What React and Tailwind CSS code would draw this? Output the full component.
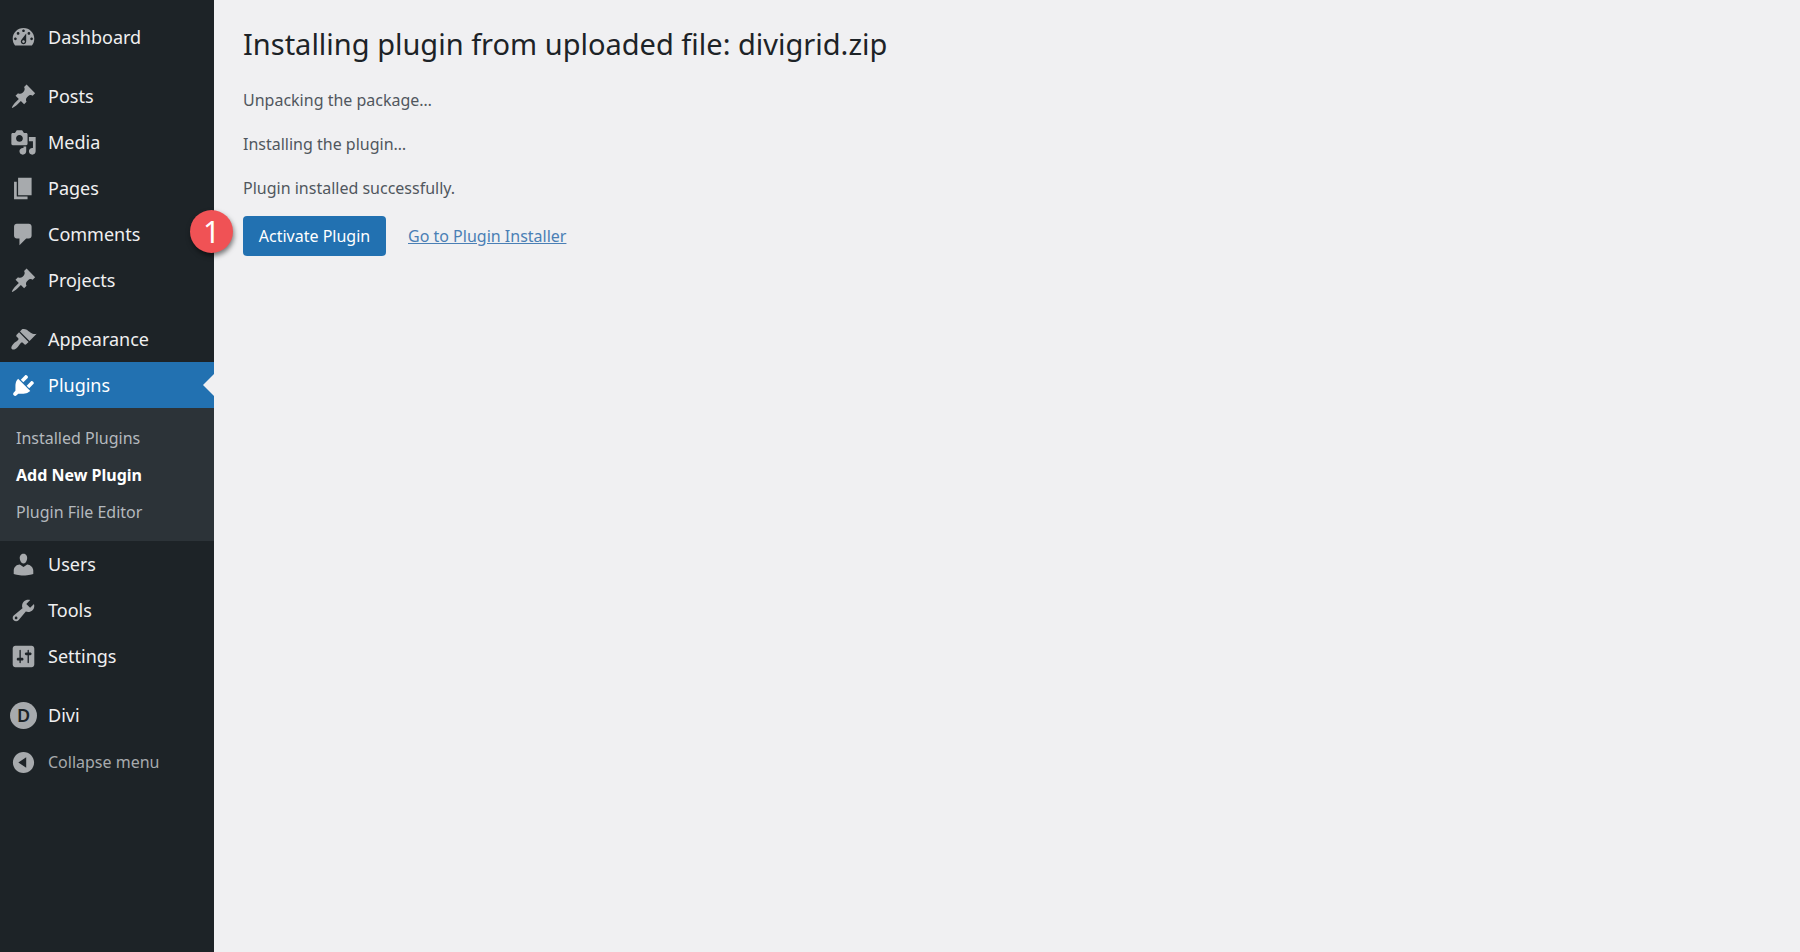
import React from 'react';
import clsx from 'clsx';

const ICONS = {
  dashboard:
    'M3.76 16h12.48c1.1-1.37 1.76-3.11 1.76-5 0-4.42-3.58-8-8-8s-8 3.58-8 8c0 1.89.66 3.63 1.76 5zM10 4c.55 0 1 .45 1 1s-.45 1-1 1-1-.45-1-1 .45-1 1-1zM6 6c.55 0 1 .45 1 1s-.45 1-1 1-1-.45-1-1 .45-1 1-1zm8 0c.55 0 1 .45 1 1s-.45 1-1 1-1-.45-1-1 .45-1 1-1zm-5.37 5.55L12 7v6c0 1.1-.9 2-2 2s-2-.9-2-2c0-.57.24-1.08.63-1.45zM4 10c.55 0 1 .45 1 1s-.45 1-1 1-1-.45-1-1 .45-1 1-1zm12 0c.55 0 1 .45 1 1s-.45 1-1 1-1-.45-1-1 .45-1 1-1zm-5 3c0-.55-.45-1-1-1s-1 .45-1 1 .45 1 1 1 1-.45 1-1z',
  pin: 'M10.44 3.02l1.82-1.82 6.36 6.35-1.83 1.82c-1.05-.68-2.48-.57-3.41.36l-.75.75c-.92.93-1.04 2.35-.35 3.41l-1.83 1.82-2.41-2.41-2.8 2.79c-.42.42-3.38 2.71-3.8 2.29s1.86-3.39 2.28-3.81l2.79-2.79L4.1 9.36l1.83-1.82c1.05.69 2.48.57 3.4-.36l.75-.75c.93-.92 1.05-2.35.36-3.41z',
  media:
    'M13 11V4c0-.55-.45-1-1-1h-1.67L9 1H5L3.67 3H2c-.55 0-1 .45-1 1v7c0 .55.45 1 1 1h10c.55 0 1-.45 1-1zM7 4.5c1.38 0 2.5 1.12 2.5 2.5S8.38 9.5 7 9.5 4.5 8.38 4.5 7 5.62 4.5 7 4.5zM14 6h5v10.5c0 1.38-1.12 2.5-2.5 2.5S14 17.88 14 16.5s1.12-2.5 2.5-2.5c.17 0 .34.02.5.05V9h-3V6zm-4 8.05V13h2v3.5c0 1.38-1.12 2.5-2.5 2.5S7 17.88 7 16.5 8.12 14 9.5 14c.17 0 .34.02.5.05z',
  page: 'M6 15V2h10v13H6zm-1 1h8v2H3V5h2v11z',
  comments: 'M5 2h9c1.1 0 2 .9 2 2v7c0 1.1-.9 2-2 2h-2l-5 5v-5H5c-1.1 0-2-.9-2-2V4c0-1.1.9-2 2-2z',
  appearance:
    'M14.48 11.06L7.41 3.99l1.5-1.5c.5-.56 2.3-.47 3.51.32 1.21.8 1.43 1.28 2.91 2.1 1.18.64 2.45 1.26 4.45.85zm-.71.71L6.7 4.7 4.93 6.47c-.39.39-.39 1.02 0 1.41l1.06 1.06c.39.39.39 1.03 0 1.42-.6.6-1.43 1.11-2.21 1.69-.35.26-.7.53-1.01.84C1.43 14.23.4 16.08 1.4 17.07c.99 1 2.84-.03 4.18-1.36.31-.31.58-.66.85-1.02.57-.78 1.08-1.61 1.69-2.21.39-.39 1.02-.39 1.41 0l1.06 1.06c.39.39 1.02.39 1.41 0z',
  plugins:
    'M13.11 4.36L9.87 7.6 8 5.73l3.24-3.24c.35-.34 1.05-.2 1.56.32.52.51.66 1.21.31 1.55zm-8 1.77l.91-1.12 9.01 9.01-1.19.84c-.71.71-2.63 1.16-3.82 1.16H6.14L4.9 17.26c-.59.59-1.54.59-2.12 0-.59-.58-.59-1.53 0-2.12l1.24-1.24v-3.88c0-1.13.4-3.19 1.09-3.89zm7.26 3.97l3.24-3.24c.34-.35 1.04-.21 1.55.31.52.51.66 1.21.31 1.55l-3.24 3.25z',
  users:
    'M10 9.25c-2.27 0-2.73-3.44-2.73-3.44C7 4.02 7.82 2 9.97 2c2.16 0 2.98 2.02 2.71 3.81 0 0-.41 3.44-2.68 3.44zm0 2.57L12.72 10c2.39 0 4.52 2.33 4.52 4.53v2.49s-3.65 1.13-7.24 1.13c-3.65 0-7.24-1.13-7.24-1.13v-2.49c0-2.25 1.94-4.48 4.47-4.48z',
  tools:
    'M16.68 9.77c-1.34 1.34-3.3 1.67-4.95.99l-5.41 6.52c-.99.99-2.59.99-3.58 0s-.99-2.59 0-3.57l6.52-5.42c-.68-1.65-.35-3.61.99-4.95 1.28-1.28 3.12-1.62 4.72-1.06l-2.89 2.89 2.82 2.82 2.86-2.87c.53 1.58.18 3.39-1.08 4.65zM3.81 16.21c.4.39 1.04.39 1.43 0 .4-.4.4-1.04 0-1.43-.39-.4-1.03-.4-1.43 0-.39.39-.39 1.03 0 1.43z',
  settings:
    'M18 16V4c0-1.1-.9-2-2-2H4c-1.1 0-2 .9-2 2v12c0 1.1.9 2 2 2h12c1.1 0 2-.9 2-2zM8 11h1c.55 0 1 .45 1 1s-.45 1-1 1H8v1.5c0 .28-.22.5-.5.5s-.5-.22-.5-.5V13H6c-.55 0-1-.45-1-1s.45-1 1-1h1V5.5c0-.28.22-.5.5-.5s.5.22.5.5V11zm5-2h-1c-.55 0-1-.45-1-1s.45-1 1-1h1V5.5c0-.28.22-.5.5-.5s.5.22.5.5V7h1c.55 0 1 .45 1 1s-.45 1-1 1h-1v5.5c0 .28-.22.5-.5.5s-.5-.22-.5-.5V9z',
  collapse:
    'M10 2.16c4.33 0 7.84 3.51 7.84 7.84s-3.51 7.84-7.84 7.84S2.16 14.33 2.16 10 5.71 2.16 10 2.16zm2 11.72V6.12L6.18 9.97z',
};

// Each inner array is a block of the menu; blocks are set apart by a small gap
const MENU = [
  [{ label: 'Dashboard', icon: 'dashboard' }],
  [
    { label: 'Posts', icon: 'pin' },
    { label: 'Media', icon: 'media' },
    { label: 'Pages', icon: 'page' },
    { label: 'Comments', icon: 'comments' },
    { label: 'Projects', icon: 'pin' },
  ],
  [
    { label: 'Appearance', icon: 'appearance' },
    {
      label: 'Plugins',
      icon: 'plugins',
      active: true,
      children: ['Installed Plugins', 'Add New Plugin', 'Plugin File Editor'],
      current: 'Add New Plugin',
    },
    { label: 'Users', icon: 'users' },
    { label: 'Tools', icon: 'tools' },
    { label: 'Settings', icon: 'settings' },
  ],
  [{ label: 'Divi', icon: 'divi' }],
];

function MenuIcon({ name, active }) {
  if (name === 'divi') {
    return (
      <span className="flex size-[27px] items-center justify-center rounded-full bg-[#a7aaad] text-[18px] leading-none font-semibold text-[#1d2327]">
        D
      </span>
    );
  }
  return (
    <svg viewBox="0 0 20 20" aria-hidden="true" className={clsx('size-[27px] shrink-0', active ? 'fill-white' : 'fill-[#a7aaad]')}>
      <path fillRule="evenodd" d={ICONS[name]} />
    </svg>
  );
}

function MenuItem({ item }) {
  return (
    <li>
      <a
        href="#"
        className={clsx(
          'relative flex h-[46px] items-center gap-[11px] pl-[10px] text-[18px] leading-6',
          item.active ? 'bg-[#2271b1] text-white' : 'text-[#f0f0f1]'
        )}
      >
        <MenuIcon name={item.icon} active={item.active} />
        {item.label}
        {item.active && (
          <span className="absolute inset-y-3 right-0 w-[11px] bg-[#f0f0f2] [clip-path:polygon(100%_0,100%_100%,0_50%)]" />
        )}
      </a>
      {item.children && (
        <ul className="bg-[#2c3338] py-[11px]">
          {item.children.map((child) => (
            <li key={child}>
              <a
                href="#"
                className={clsx(
                  'flex h-[37px] items-center pl-4 text-[16px] leading-6',
                  child === item.current ? 'font-bold text-white' : 'text-[#b4b9be]'
                )}
              >
                {child}
              </a>
            </li>
          ))}
        </ul>
      )}
    </li>
  );
}

function Sidebar() {
  return (
    <nav className="w-[214px] shrink-0 bg-[#1d2327] pt-[14px]">
      <div className="flex flex-col gap-[13px]">
        {MENU.map((block) => (
          <ul key={block[0].label}>
            {block.map((item) => (
              <MenuItem key={item.label} item={item} />
            ))}
          </ul>
        ))}
      </div>
      <button type="button" className="mt-px flex h-[46px] w-full items-center gap-[11px] pl-[10px] text-[16px] leading-6 text-[#a7aaad]">
        <MenuIcon name="collapse" />
        Collapse menu
      </button>
    </nav>
  );
}

export default function App() {
  return (
    <div className="flex min-h-screen bg-[#f0f0f2] font-['Noto_Sans',sans-serif]">
      <Sidebar />
      <main className="flex-1 pt-6 pl-[29px]">
        <h1 className="text-[29px] leading-10 text-[#1d2327]">Installing plugin from uploaded file: divigrid.zip</h1>
        <div className="mt-6 space-y-5 text-[16px] leading-6 text-[#50575e]">
          <p>Unpacking the package…</p>
          <p>Installing the plugin…</p>
          <p>Plugin installed successfully.</p>
        </div>
        <div className="relative mt-4 flex items-center gap-[22px] text-[16px] leading-6">
          <span className="absolute top-[-6px] left-[-53px] flex size-[43px] items-center justify-center rounded-full bg-[#f05255] text-[30px] leading-none text-white shadow-[1px_3px_5px_rgba(0,0,0,0.5)]">
            1
          </span>
          <button type="button" className="h-10 w-[143px] rounded-[4px] bg-[#2271b1] text-white">
            Activate Plugin
          </button>
          <a href="#" className="text-[#4a7fb5] underline">
            Go to Plugin Installer
          </a>
        </div>
      </main>
    </div>
  );
}
